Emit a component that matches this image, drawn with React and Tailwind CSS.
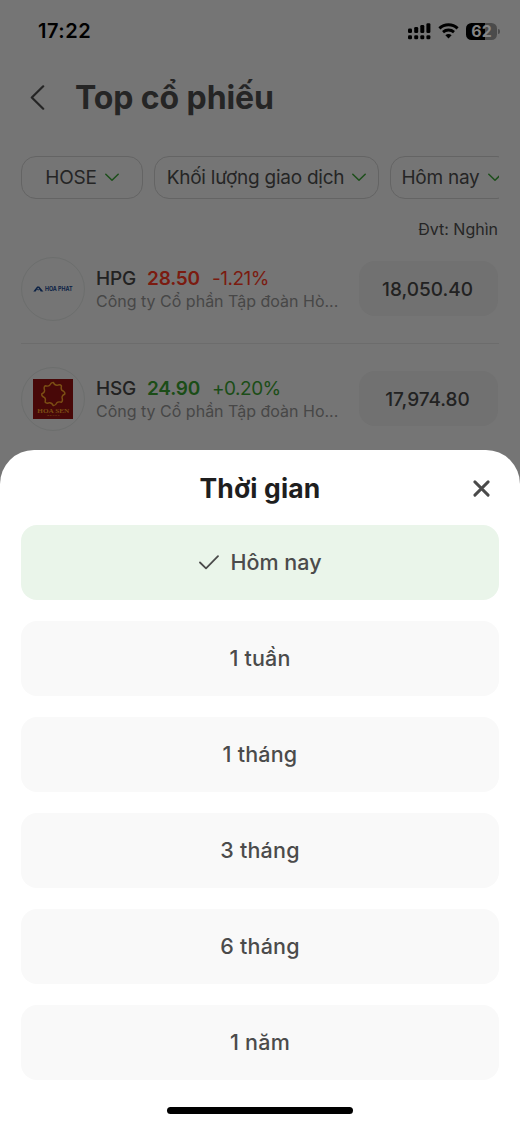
import clsx from 'clsx';

const filters = [
  { label: 'HOSE', className: 'w-[122px] justify-center' },
  { label: 'Khối lượng giao dịch', className: 'w-[225px] justify-center' },
  { label: 'Hôm nay', className: 'w-[122px] pl-[10.5px]' },
];

const stocks = [
  {
    symbol: 'HPG',
    price: '28.50',
    change: '-1.21%',
    company: 'Công ty Cổ phần Tập đoàn Hò...',
    volume: '18,050.40',
    color: 'text-[#7b1b10]',
    Logo: HoaPhatLogo,
  },
  {
    symbol: 'HSG',
    price: '24.90',
    change: '+0.20%',
    company: 'Công ty Cổ phần Tập đoàn Ho...',
    volume: '17,974.80',
    color: 'text-[#1b4d17]',
    Logo: HoaSenLogo,
  },
];

const periods = ['Hôm nay', '1 tuần', '1 tháng', '3 tháng', '6 tháng', '1 năm'];

function HoaPhatLogo() {
  return (
    <svg width="46" height="16" viewBox="-3 -4 46 16" className="overflow-visible text-[#0b2145]">
      <path d="M0.3 6.4L4.2 1.5H6.2L10.4 6.4H7.7L6.5 4.6 5.2 5.4 3.9 4.6 2.7 6.4Z" fill="currentColor" />
      <path d="M5.2 2.7L6.3 4 5.2 4.6 4.1 4Z" fill="#757575" />
      <text x="12" y="6.4" textLength="27.6" lengthAdjust="spacingAndGlyphs" className="fill-current font-[Inter] text-[5.8px] font-bold">
        HOA PHAT
      </text>
    </svg>
  );
}

function HoaSenLogo() {
  return (
    <svg width="40" height="40" viewBox="0 0 40 40">
      <rect width="40" height="40" fill="#480808" />
      <path
        d="M20.3 3.4Q21.6 6.4 23.9 6.3Q27.2 5 28.5 6.8Q27.6 10.2 29 11.4Q32.2 12.8 31.9 15Q29 16.4 29 18.6Q30.2 21.8 28.5 23.2Q25.2 22.3 23.9 23.7Q22.4 26.8 20.3 26.6Q18.9 23.7 16.7 23.7Q13.4 25 12.1 23.2Q13 19.8 11.6 18.6Q8.4 17.2 8.7 15Q11.6 13.6 11.6 11.4Q10.4 8.2 12.1 6.8Q15.4 7.7 16.7 6.3Q18.2 3.2 20.3 3.4Z"
        fill="none"
        stroke="#7c4f14"
        strokeWidth="1.4"
        strokeLinejoin="round"
      />
      <text x="4.3" y="33.8" textLength="32" lengthAdjust="spacingAndGlyphs" fill="#7c4f14" className="font-['Liberation_Serif'] text-[7px] font-bold">
        HOA SEN
      </text>
      <text x="14" y="37.4" textLength="12.5" fill="#7c4f14" className="font-['Liberation_Serif'] text-[2.6px] font-bold">
        GROUP
      </text>
    </svg>
  );
}

function Chevron() {
  return (
    <svg width="14" height="9" viewBox="0 0 14 9" fill="none" className="shrink-0 text-[#1d4f1b]">
      <path d="M0.8 1.2L7 7.3L13.2 1.2" stroke="currentColor" strokeWidth="1.5" strokeLinecap="round" strokeLinejoin="round" />
    </svg>
  );
}

function StatusBar() {
  return (
    <div className="flex h-[62px] items-center justify-between pl-[38px] pr-[20px] text-black">
      <span className="text-[20px] font-semibold tracking-[0.5px]">17:22</span>
      <div className="flex items-center">
        <svg width="23" height="17" viewBox="0 0 23 17" fill="currentColor">
          <rect x="0" y="5.6" width="4" height="4.4" rx="1.3" />
          <rect x="6.2" y="4" width="4" height="6" rx="1.3" />
          <rect x="12.3" y="2" width="4" height="8" rx="1.3" />
          <rect x="18.4" y="0.3" width="4" height="9.7" rx="1.3" />
          <rect x="0" y="12.2" width="4" height="4" rx="1.3" />
          <rect x="6.2" y="12.2" width="4" height="4" rx="1.3" />
          <rect x="12.3" y="12.2" width="4" height="4" rx="1.3" />
          <rect x="18.4" y="12.2" width="4" height="4" rx="1.3" />
        </svg>
        <svg width="21" height="16" viewBox="0 0 21 16" fill="none" stroke="currentColor" className="ml-[7.5px]">
          <path d="M1.4 5.4C6.5 0.6 14.5 0.6 19.6 5.4" strokeWidth="3" />
          <path d="M5 9.1C8.1 6.3 12.9 6.3 16 9.1" strokeWidth="2.8" />
          <path d="M10.5 15.4L7.4 12.2C9.2 10.6 11.8 10.6 13.6 12.2Z" fill="currentColor" stroke="none" />
        </svg>
        <div className="ml-[7px] flex items-center gap-px">
          <div className="flex h-[17px] w-[31px] items-center justify-center rounded-[5.5px] bg-linear-to-r from-black from-62% to-[#4b4b4b] to-62% text-[16px] leading-none font-bold text-[#858585]">
            62
          </div>
          <div className="h-[5px] w-[2px] rounded-r bg-[#4b4b4b]" />
        </div>
      </div>
    </div>
  );
}

function StockRow({ stock }) {
  const { symbol, price, change, company, volume, color, Logo } = stock;
  return (
    <div className="flex h-[110px] items-center border-b border-[#6c6c6c]">
      <div className="flex h-16 w-16 shrink-0 items-center justify-center rounded-full border border-[#6c6e6d]">
        <Logo />
      </div>
      <div className="ml-[11px] w-[263px] pt-[2px]">
        <div className="flex text-[19px] leading-[23px] tracking-[-0.2px]">
          <span className="w-[51px] font-medium text-[#222]">{symbol}</span>
          <span className={clsx('w-[65px] font-semibold', color)}>{price}</span>
          <span className={clsx('tracking-[-0.5px]', color)}>{change}</span>
        </div>
        <p className="text-[16px] leading-[22px] whitespace-nowrap text-[#474747]">{company}</p>
      </div>
      <div className="flex h-[55px] w-[139px] items-center justify-center rounded-[16px] bg-[#717171] pt-[3px] pr-[2px] text-[19px] font-medium text-[#222]">
        {volume}
      </div>
    </div>
  );
}

function PeriodSheet({ selected }) {
  return (
    <div className="absolute inset-x-0 bottom-0 flex h-[675px] flex-col rounded-t-[34px] bg-white px-[21px]">
      <div className="relative flex h-[75px] items-center justify-center pt-[3px]">
        <h2 className="text-[26.5px] font-bold tracking-[0.15px] text-[#1e1e1e]">Thời gian</h2>
        <button type="button" aria-label="Đóng" className="absolute top-[30px] right-[9px] text-[#4a4a4a]">
          <svg width="17" height="17" viewBox="0 0 17 17" stroke="currentColor" strokeWidth="2.9" strokeLinecap="round">
            <path d="M1.9 1.9L15.1 15.1M15.1 1.9L1.9 15.1" />
          </svg>
        </button>
      </div>
      <div className="flex flex-col gap-[21.5px]">
        {periods.map((period) => (
          <button
            key={period}
            type="button"
            className={clsx(
              'flex h-[74.5px] items-center justify-center rounded-[16px] text-[21.5px] font-medium text-[#4b4b4b]',
              period === selected ? 'bg-[#eaf5ea]' : 'bg-[#f9f9f9] tracking-[0.2px]'
            )}
          >
            {period === selected && (
              <svg width="20" height="15" viewBox="0 0 20 15" fill="none" className="mr-3">
                <path d="M1 7.5L7 13.3L19 1.2" stroke="currentColor" strokeWidth="1.8" strokeLinecap="round" strokeLinejoin="round" />
              </svg>
            )}
            {period}
          </button>
        ))}
      </div>
      <div className="mx-auto mt-[27px] h-[7px] w-[186px] rounded-full bg-black" />
    </div>
  );
}

export default function App() {
  return (
    <div className="relative h-[1125px] w-[520px] overflow-hidden bg-[#757575] font-[Inter,sans-serif]">
      <StatusBar />
      <header className="flex h-[70px] items-center pl-[30px]">
        <svg width="15" height="25" viewBox="0 0 15 25" fill="none" className="text-[#252525]">
          <path d="M13.2 1.3L1.8 12.5L13.2 23.7" stroke="currentColor" strokeWidth="2.2" strokeLinecap="round" strokeLinejoin="round" />
        </svg>
        <h1 className="ml-[30px] pt-[2px] text-[32px] font-bold tracking-[-0.1px] text-[#252525]">Top cổ phiếu</h1>
      </header>
      <main className="px-[21px] pt-6">
        <div className="flex gap-[11px] overflow-hidden">
          {filters.map((filter) => (
            <div
              key={filter.label}
              className={clsx(
                'flex h-[43px] shrink-0 items-center gap-2 rounded-[15px] border-[1.5px] border-[#646464] text-[19px] tracking-[-0.25px] whitespace-nowrap text-[#252525]',
                filter.className
              )}
            >
              <span className="pt-[2px]">{filter.label}</span>
              <Chevron />
            </div>
          ))}
        </div>
        <p className="mt-[18px] pr-px text-right text-[16px] leading-6 text-[#252525]">Đvt: Nghìn</p>
        <div className="-mt-[7px]">
          {stocks.map((stock) => (
            <StockRow key={stock.symbol} stock={stock} />
          ))}
        </div>
      </main>
      <PeriodSheet selected="Hôm nay" />
    </div>
  );
}
